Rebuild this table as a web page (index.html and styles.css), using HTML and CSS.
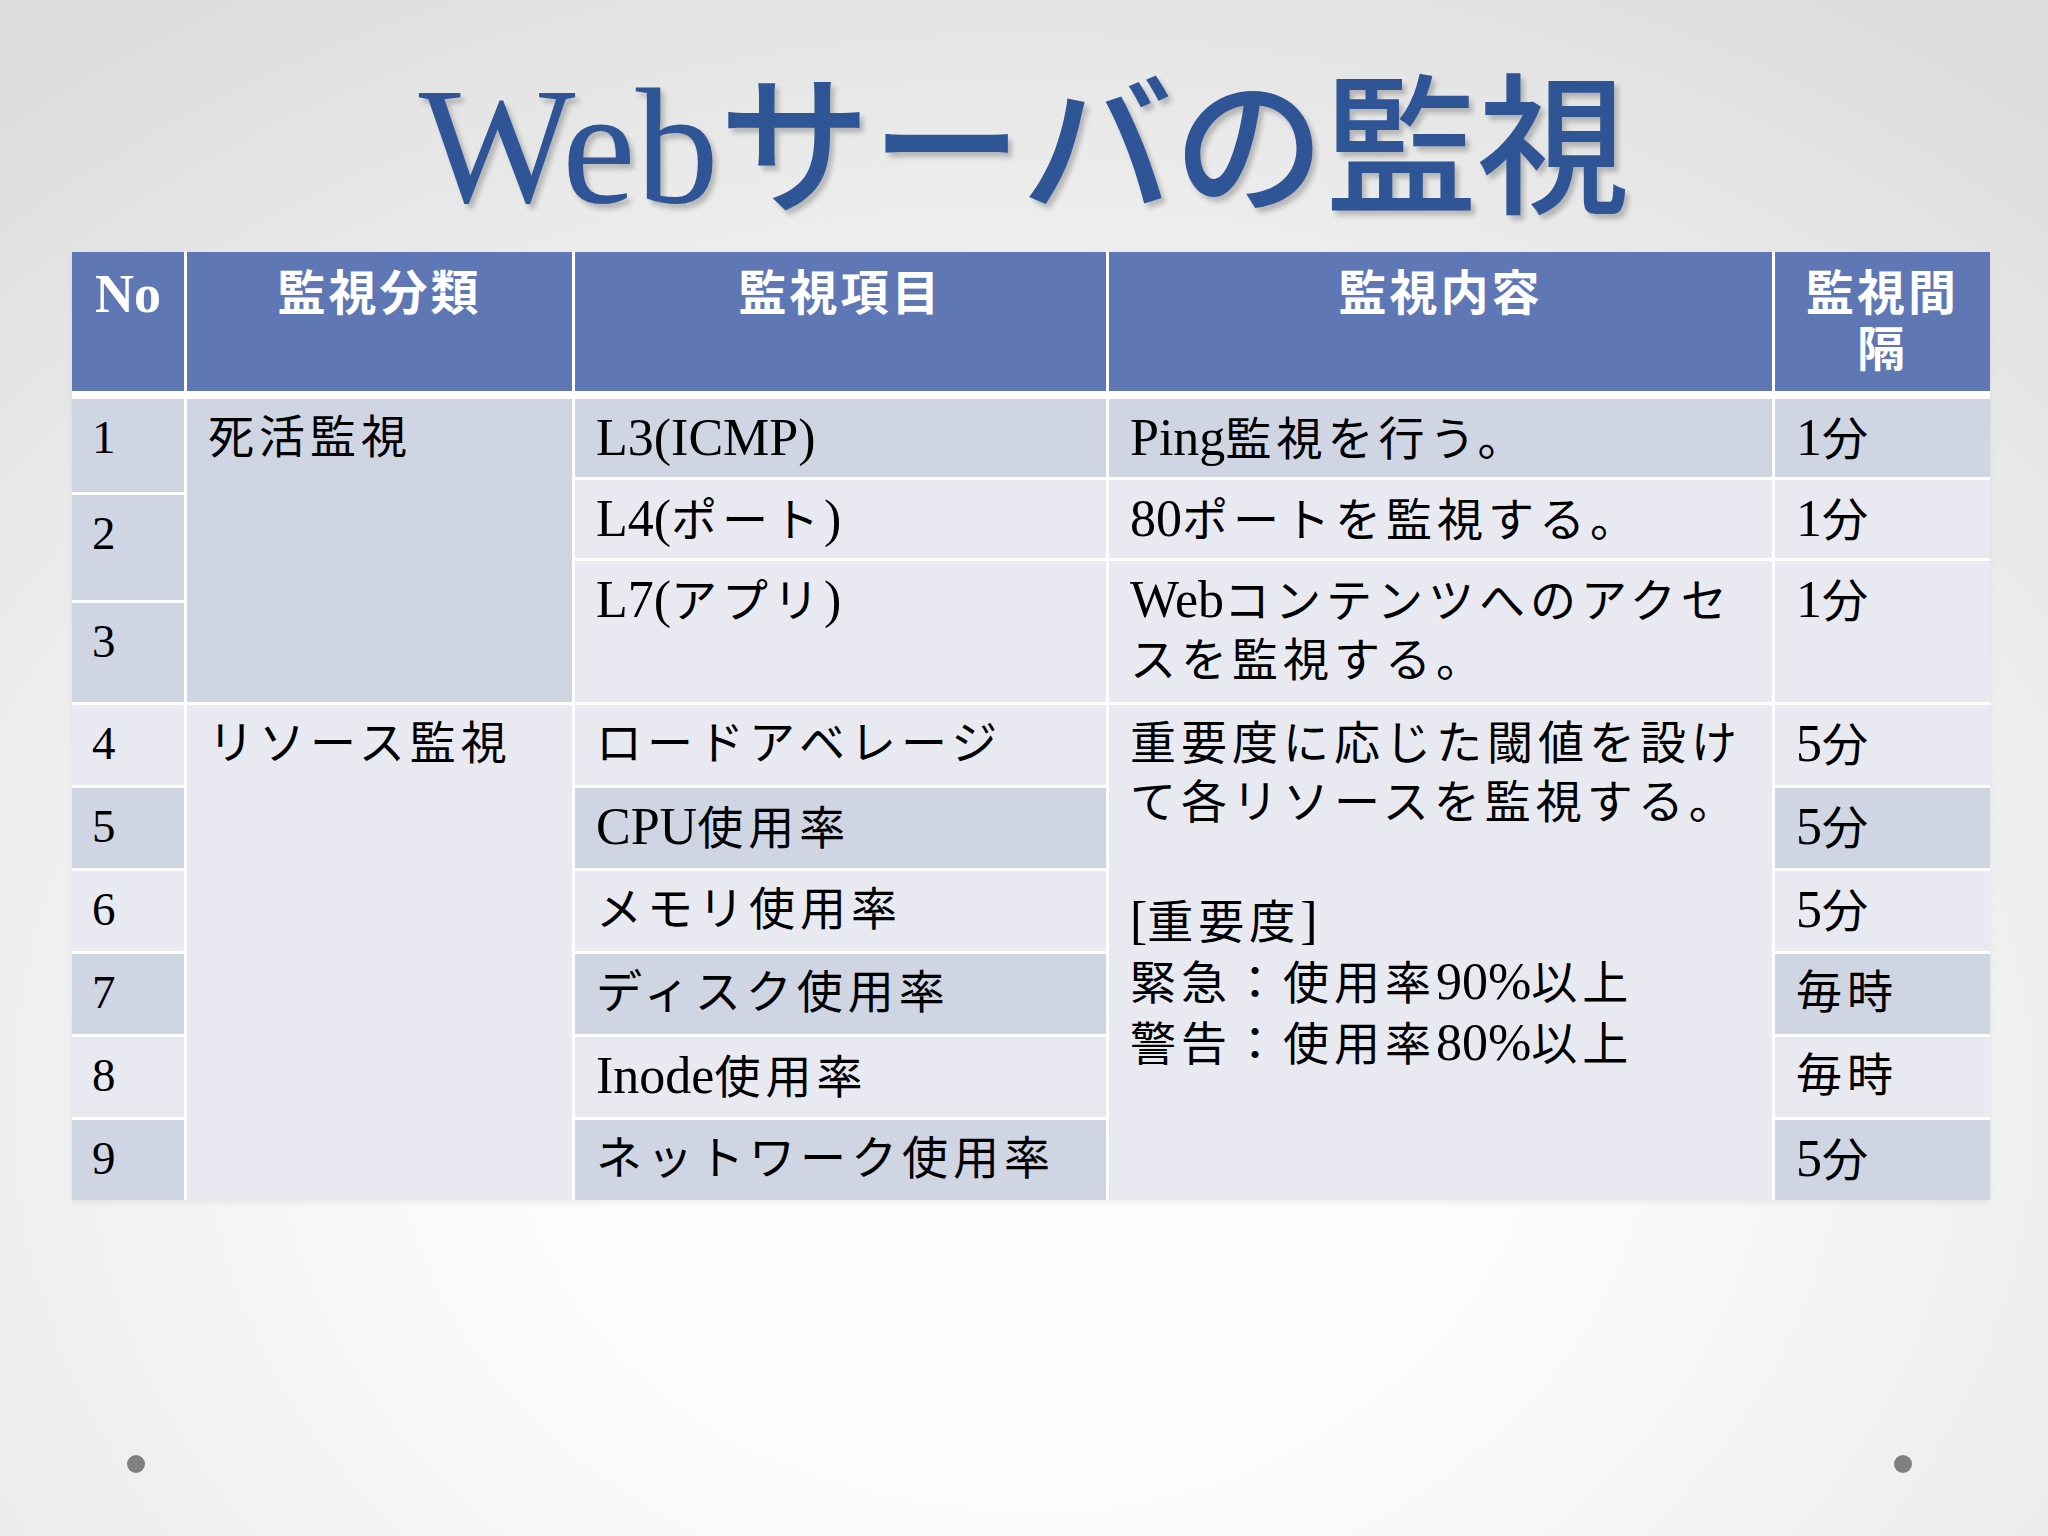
FILE: index.html
```html
<!DOCTYPE html>
<html lang="ja">
<head>
<meta charset="utf-8">
<title>Webサーバの監視</title>
<link rel="stylesheet" href="styles.css">
</head>
<body>
<div class="slide">
  <h1 class="title"><span class="title-lat">Web</span>サーバの監視</h1>
  <div class="table">
    <div class="thead">
      <div class="th th-no">No</div>
      <div class="th">監視分類</div>
      <div class="th">監視項目</div>
      <div class="th">監視内容</div>
      <div class="th">監視間<br>隔</div>
    </div>
    <div class="sect1">
      <div class="no-stack">
        <div class="td no dark s1a">1</div>
        <div class="td no dark s1b">2</div>
        <div class="td no dark s1c">3</div>
      </div>
      <div class="td dark">死活監視</div>
      <div class="s1-grid">
        <div class="td dark"><span class="lat">L3(ICMP)</span></div>
        <div class="td dark"><span class="lat">Ping</span>監視を行う。</div>
        <div class="td dark"><span class="lat">1</span>分</div>
        <div class="td light"><span class="lat">L4(</span>ポート<span class="lat">)</span></div>
        <div class="td light"><span class="lat">80</span>ポートを監視する。</div>
        <div class="td light"><span class="lat">1</span>分</div>
        <div class="td light"><span class="lat">L7(</span>アプリ<span class="lat">)</span></div>
        <div class="td light"><span class="lat">Web</span>コンテンツへのアクセ<br>スを監視する。</div>
        <div class="td light"><span class="lat">1</span>分</div>
      </div>
    </div>
    <div class="sect2">
      <div class="td no light">4</div>
      <div class="td light span6">リソース監視</div>
      <div class="td light">ロードアベレージ</div>
      <div class="td light span6">重要度に応じた閾値を設け<br>て各リソースを監視する。<br><br><span class="lat">[</span>重要度<span class="lat">]</span><br>緊急：使用率<span class="lat">90%</span>以上<br>警告：使用率<span class="lat">80%</span>以上</div>
      <div class="td light"><span class="lat">5</span>分</div>

      <div class="td no dark">5</div>
      <div class="td dark"><span class="lat">CPU</span>使用率</div>
      <div class="td dark"><span class="lat">5</span>分</div>

      <div class="td no light">6</div>
      <div class="td light">メモリ使用率</div>
      <div class="td light"><span class="lat">5</span>分</div>

      <div class="td no dark">7</div>
      <div class="td dark">ディスク使用率</div>
      <div class="td dark">毎時</div>

      <div class="td no light">8</div>
      <div class="td light"><span class="lat">Inode</span>使用率</div>
      <div class="td light">毎時</div>

      <div class="td no dark">9</div>
      <div class="td dark">ネットワーク使用率</div>
      <div class="td dark"><span class="lat">5</span>分</div>
    </div>
  </div>
  <div class="footer">
    <span class="dot"></span>
    <span class="dot"></span>
  </div>
</div>
</body>
</html>
```
FILE: styles.css
```css
* {
  box-sizing: border-box;
  margin: 0;
  padding: 0;
}

html, body {
  width: 2048px;
  height: 1536px;
}

body {
  overflow: hidden;
  font-family: "Liberation Serif", "Noto Sans CJK JP", serif;
  background: radial-gradient(ellipse 80% 85% at 50% 72%, #ffffff 0%, #fbfbfb 35%, #ececec 70%, #dcdcdc 100%);
}

.slide {
  width: 2048px;
  height: 1536px;
  display: flex;
  flex-direction: column;
  padding: 70px 0 63px 0;
}

.title {
  font-family: "Liberation Serif", "Noto Sans CJK JP", serif;
  font-size: 152px;
  line-height: 152px;
  height: 152px;
  font-weight: 500;
  color: #2f5597;
  text-align: center;
  text-shadow: 4px 5px 5px rgba(0, 0, 0, 0.22);
}

.title-lat {
  font-size: 166px;
  font-weight: 400;
}

.table {
  width: 1918px;
  margin: 30px 0 0 72px;
  background: #ffffff;
  display: flex;
  flex-direction: column;
  box-shadow: 0 3px 6px rgba(0, 0, 0, 0.06);
}

.thead {
  display: grid;
  grid-template-columns: 112px 385px 531px 663px 215px;
  column-gap: 3px;
  height: 139px;
  margin-bottom: 8px;
}

.th {
  background: #5f77b4;
  color: #ffffff;
  font-family: "Liberation Serif", "Noto Sans CJK JP", sans-serif;
  font-weight: 700;
  font-size: 48px;
  line-height: 56px;
  letter-spacing: 3px;
  text-align: center;
  padding-top: 14px;
}

.th-no {
  font-size: 54px;
  letter-spacing: 0;
}

.sect1 {
  display: grid;
  grid-template-columns: 112px 385px 1415px;
  column-gap: 3px;
  height: 303px;
  margin-bottom: 3px;
}

.no-stack {
  display: flex;
  flex-direction: column;
  gap: 3px;
}

.s1a { height: 93px; }
.s1b { height: 105px; }
.s1c { height: 99px; }

.s1-grid {
  display: grid;
  grid-template-columns: 531px 663px 215px;
  grid-template-rows: 78px 78px 141px;
  gap: 3px;
}

.sect2 {
  display: grid;
  grid-template-columns: 112px 385px 531px 663px 215px;
  grid-template-rows: repeat(6, 80px);
  gap: 3px;
}

.span6 {
  grid-row: span 6;
}

.td {
  padding: 9px 12px 0 21px;
  font-size: 46px;
  line-height: 59px;
  letter-spacing: 5px;
  color: #000000;
  white-space: nowrap;
}

.lat {
  font-size: 52px;
  letter-spacing: 0;
}

.no {
  font-size: 47px;
  letter-spacing: 0;
  padding-left: 20px;
}

.dark { background: #d0d5e3; }
.light { background: #e9eaf1; }

.footer {
  margin-top: auto;
  display: flex;
  justify-content: space-between;
  padding: 0 136px 0 127px;
}

.dot {
  width: 18px;
  height: 18px;
  border-radius: 50%;
  background: #808080;
}
```
